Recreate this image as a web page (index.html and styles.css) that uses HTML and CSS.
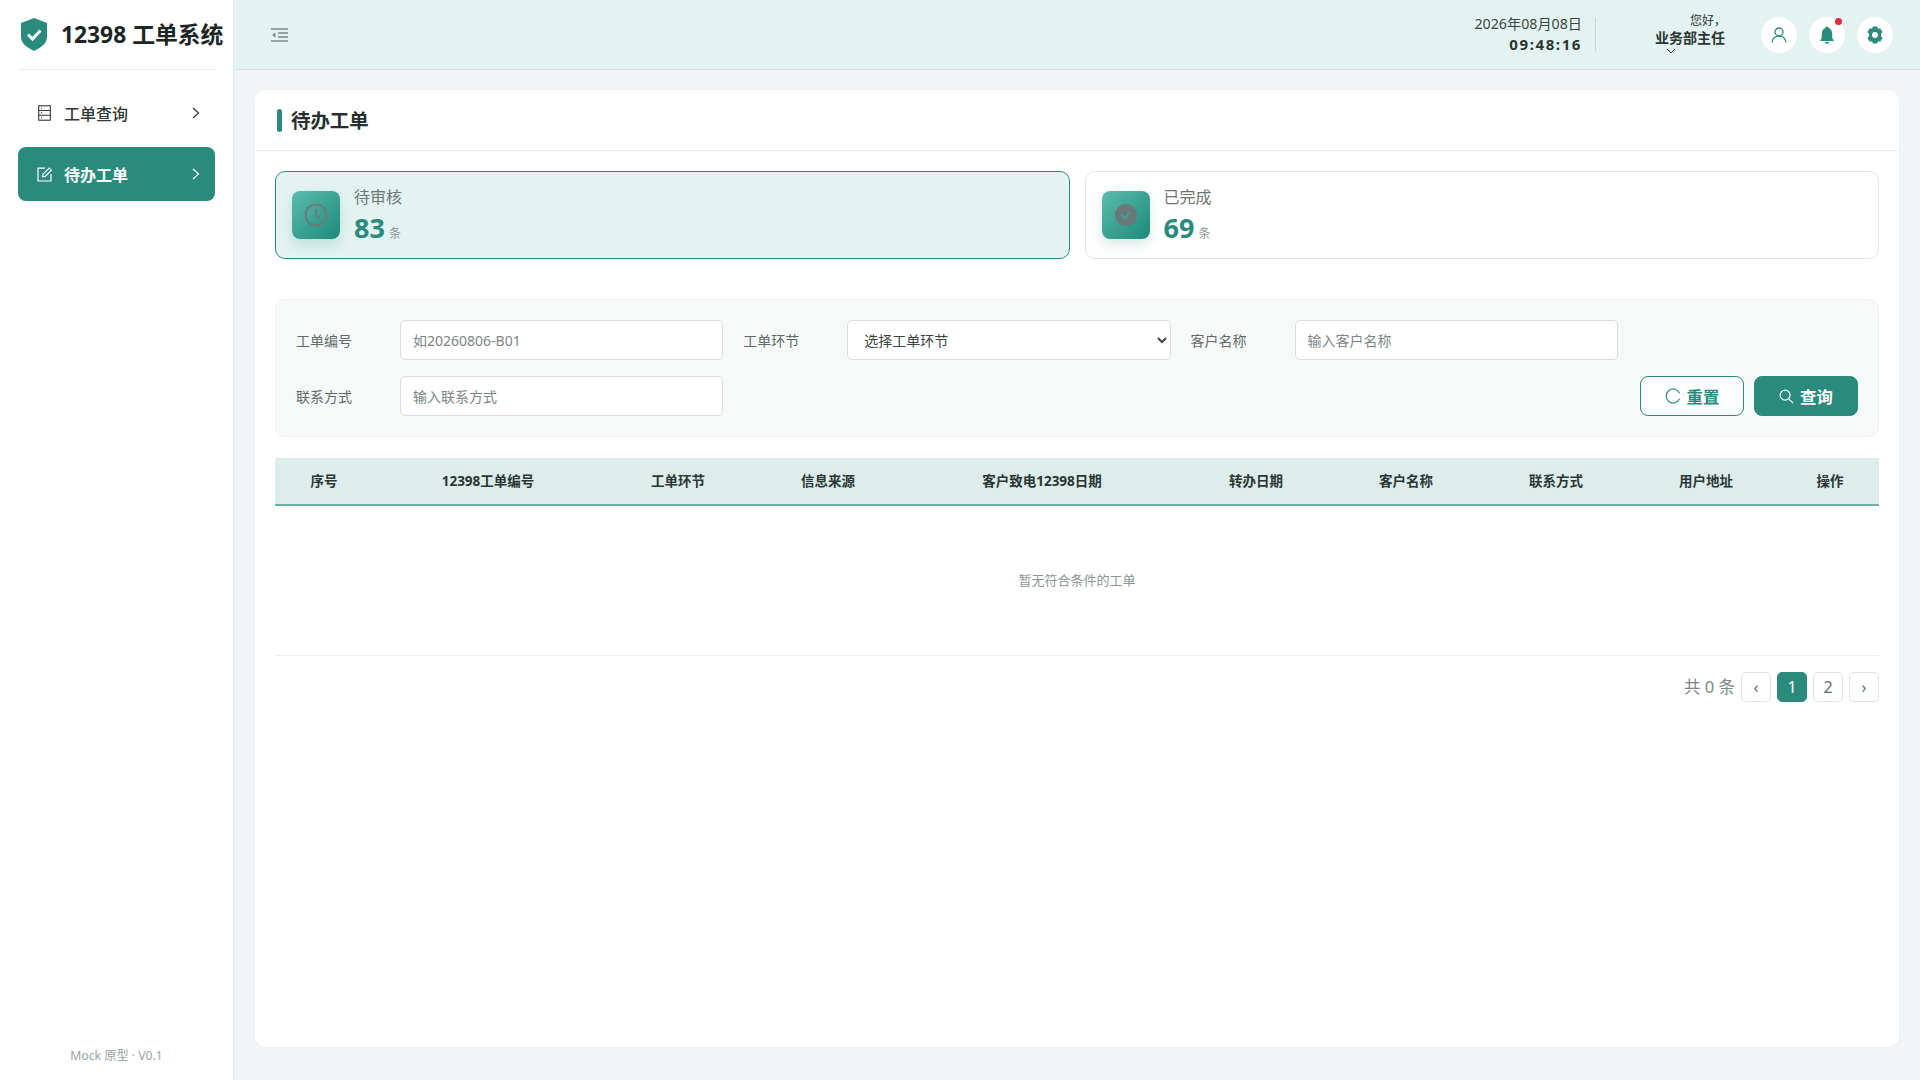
FILE: index.html
```html
<!DOCTYPE html>
<html lang="zh-CN">

<head>
    <meta charset="UTF-8">
    <title>12398 工单系统</title>
    <link rel="stylesheet" href="styles.css">
</head>

<body>
    <div class="app">
        <aside class="sidebar">
            <div class="brand">
                <svg class="brand-logo" viewBox="0 0 28 33" width="28" height="33">
                    <path d="M14 0 L27 5 V19 C27 26 20 30 14 33 C8 30 1 26 1 19 V5 Z" fill="#2a8a7c" />
                    <path d="M8 16.5 L12.5 21 L20.5 12.5" fill="none" stroke="#fff" stroke-width="3" />
                </svg>
                <span class="brand-name">12398 工单系统</span>
            </div>
            <nav class="menu">
                <a class="menu-item">
                    <svg class="menu-icon" viewBox="0 0 14 16" width="15" height="16" fill="none" stroke="currentColor" stroke-width="1.1">
                        <rect x="1.2" y="0.8" width="11.6" height="14.4" />
                        <path d="M1.2 5.5 H12.8 M1.2 10.3 H12.8 M3.4 3.2 H4.6 M3.4 7.9 H4.6 M3.4 12.7 H4.6" />
                    </svg>
                    <span class="menu-text">工单查询</span>
                    <svg class="menu-arrow" viewBox="0 0 8 12" width="8" height="12" fill="none" stroke="currentColor" stroke-width="1.2">
                        <path d="M1 1 L6.5 6 L1 11" />
                    </svg>
                </a>
                <a class="menu-item active">
                    <svg class="menu-icon" viewBox="0 0 15 15" width="15" height="15" fill="none" stroke="currentColor" stroke-width="1.2">
                        <path d="M8 1.2 H1 V14 H14 V7" />
                        <path d="M5.5 9.8 L6 7.2 L12.2 1 L14.4 3.2 L8.2 9.4 Z" />
                    </svg>
                    <span class="menu-text">待办工单</span>
                    <svg class="menu-arrow" viewBox="0 0 8 12" width="8" height="12" fill="none" stroke="currentColor" stroke-width="1.2">
                        <path d="M1 1 L6.5 6 L1 11" />
                    </svg>
                </a>
            </nav>
            <div class="version">Mock 原型 · V0.1</div>
        </aside>

        <div class="main">
            <header class="topbar">
                <svg class="fold" viewBox="0 0 17 14" width="17" height="14" fill="none" stroke="#7c8a88" stroke-width="1.3">
                    <path d="M0 1 H17 M7 5 H17 M7 9 H17 M0 13 H17" />
                    <path d="M4.5 4.5 L1 7 L4.5 9.5 Z" fill="#7c8a88" stroke="none" />
                </svg>
                <div class="top-right">
                    <div class="clock">
                        <div class="clock-date">2026年08月08日</div>
                        <div class="clock-time">09:48:16</div>
                    </div>
                    <div class="user">
                        <div class="user-hello">您好，</div>
                        <div class="user-name">业务部主任</div>
                        <svg class="user-arrow" viewBox="0 0 10 6" width="10" height="6" fill="none" stroke="#34413f" stroke-width="1">
                            <path d="M1 1 L5 5 L9 1" />
                        </svg>
                    </div>
                    <div class="round-btn">
                        <svg viewBox="0 0 16 16" width="16" height="16" fill="none" stroke="#2a8a7c" stroke-width="1.3">
                            <circle cx="8" cy="5" r="4" />
                            <path d="M1 15.5 C1.5 11.5 4 9.2 8 9.2 C12 9.2 14.5 11.5 15 15.5" />
                        </svg>
                    </div>
                    <div class="round-btn has-dot">
                        <svg viewBox="0 0 16 18" width="16" height="18" fill="#2a8a7c">
                            <path d="M8 0.5 C9 0.5 9.5 1.2 9.5 2 C12 2.8 13.2 5 13.2 8 V12 L15 15 H1 L2.8 12 V8 C2.8 5 4 2.8 6.5 2 C6.5 1.2 7 0.5 8 0.5 Z" />
                            <path d="M5.8 16 H10.2 C10 17.2 9 17.8 8 17.8 C7 17.8 6 17.2 5.8 16 Z" />
                        </svg>
                        <span class="dot"></span>
                    </div>
                    <div class="round-btn">
                        <svg viewBox="0 0 18 18" width="18" height="18">
                            <path fill="#2a8a7c" fill-rule="evenodd" d="M6.8 0.6 H11.2 L11.9 2.8 L14.2 2.2 L16.6 6.2 L15 7.6 V10.4 L16.6 11.8 L14.2 15.8 L11.9 15.2 L11.2 17.4 H6.8 L6.1 15.2 L3.8 15.8 L1.4 11.8 L3 10.4 V7.6 L1.4 6.2 L3.8 2.2 L6.1 2.8 Z M9 6 A3 3 0 1 0 9 12 A3 3 0 1 0 9 6 Z" />
                        </svg>
                    </div>
                </div>
            </header>

            <main class="content">
                <section class="card">
                    <div class="card-head">
                        <span class="card-bar"></span>
                        <h1 class="card-title">待办工单</h1>
                    </div>
                    <div class="card-body">
                        <div class="stats">
                            <div class="stat active">
                                <div class="stat-icon">
                                    <svg viewBox="0 0 24 24" width="24" height="24" fill="none" stroke="#6b7b7a" stroke-width="2">
                                        <circle cx="12" cy="12" r="10.5" />
                                        <path d="M12 6 V12 L16 15.5" />
                                    </svg>
                                </div>
                                <div class="stat-text">
                                    <div class="stat-label">待审核</div>
                                    <div class="stat-value">83<small>条</small></div>
                                </div>
                            </div>
                            <div class="stat">
                                <div class="stat-icon">
                                    <svg viewBox="0 0 24 24" width="24" height="24">
                                        <circle cx="12" cy="12" r="11" fill="#687978" />
                                        <path d="M7.5 12 L10.8 15.3 L16.5 9" fill="none" stroke="#3fa596" stroke-width="1.6" />
                                    </svg>
                                </div>
                                <div class="stat-text">
                                    <div class="stat-label">已完成</div>
                                    <div class="stat-value">69<small>条</small></div>
                                </div>
                            </div>
                        </div>

                        <form class="filter">
                            <label>工单编号</label>
                            <input type="text" placeholder="如20260806-B01">
                            <label>工单环节</label>
                            <select>
                                <option>选择工单环节</option>
                            </select>
                            <label>客户名称</label>
                            <input type="text" placeholder="输入客户名称">
                            <label class="row-start">联系方式</label>
                            <input type="text" placeholder="输入联系方式">
                            <div class="filter-btns">
                                <button type="button" class="btn btn-line">
                                    <svg viewBox="0 0 16 16" width="16" height="16" fill="none" stroke="currentColor" stroke-width="1.2">
                                        <path d="M14.6 5.2 A7 7 0 1 0 14.6 10.8" />
                                    </svg>
                                    重置
                                </button>
                                <button type="button" class="btn btn-fill">
                                    <svg viewBox="0 0 16 16" width="15" height="15" fill="none" stroke="currentColor" stroke-width="1.3">
                                        <circle cx="6.5" cy="6.5" r="5.3" />
                                        <path d="M10.5 10.5 L15 15" />
                                    </svg>
                                    查询
                                </button>
                            </div>
                        </form>

                        <table class="list">
                            <colgroup>
                                <col class="c-no">
                                <col class="c-code">
                                <col class="c-std">
                                <col class="c-std">
                                <col class="c-date">
                                <col class="c-std">
                                <col class="c-std">
                                <col class="c-std">
                                <col class="c-std">
                                <col class="c-op">
                            </colgroup>
                            <thead>
                                <tr>
                                    <th>序号</th>
                                    <th>12398工单编号</th>
                                    <th>工单环节</th>
                                    <th>信息来源</th>
                                    <th>客户致电12398日期</th>
                                    <th>转办日期</th>
                                    <th>客户名称</th>
                                    <th>联系方式</th>
                                    <th>用户地址</th>
                                    <th>操作</th>
                                </tr>
                            </thead>
                            <tbody>
                                <tr>
                                    <td colspan="10" class="empty">暂无符合条件的工单</td>
                                </tr>
                            </tbody>
                        </table>

                        <div class="pager">
                            <span class="pager-total">共 0 条</span>
                            <span class="page-btn arrow">‹</span>
                            <span class="page-btn current">1</span>
                            <span class="page-btn">2</span>
                            <span class="page-btn arrow">›</span>
                        </div>
                    </div>
                </section>
            </main>
        </div>
    </div>
</body>

</html>
```

FILE: styles.css
```css
* {
    box-sizing: border-box;
}

body {
    margin: 0;
    font-family: "Noto Sans", "Noto Sans CJK SC", sans-serif;
    color: #25302e;
    background: #f2f5f7;
}

.app {
    display: flex;
    height: 1080px;
    overflow: hidden;
}

/* 侧边栏 */
.sidebar {
    width: 234px;
    flex-shrink: 0;
    display: flex;
    flex-direction: column;
    background: #fff;
    border-right: 1px solid #e6eaec;
    padding: 0 18px;
}

.brand {
    height: 70px;
    display: flex;
    align-items: center;
    gap: 13px;
    margin-right: -2px;
    padding-left: 2px;
    border-bottom: 1px solid #e9edee;
    white-space: nowrap;
}

.brand-logo {
    flex-shrink: 0;
}

.brand-name {
    margin-bottom: 2px;
    font-size: 22.8px;
    font-weight: 700;
    color: #1b2523;
}

.menu {
    display: flex;
    flex-direction: column;
    gap: 7px;
    margin-top: 16px;
}

.menu-item {
    height: 54px;
    display: flex;
    align-items: center;
    border-radius: 8px;
    padding: 0 15px 0 19px;
    color: #2f3a38;
    font-size: 16px;
    font-weight: 500;
}

.menu-item.active {
    background: #2a8a7c;
    color: #fff;
    font-weight: 700;
}

.menu-icon {
    margin-right: 12px;
}

.menu-text {
    flex: 1;
}

.version {
    margin-top: auto;
    padding-bottom: 16px;
    text-align: center;
    font-size: 12.2px;
    color: #98a3a2;
}

/* 顶栏 */
.main {
    flex: 1;
    min-width: 0;
    display: flex;
    flex-direction: column;
}

.topbar {
    height: 70px;
    flex-shrink: 0;
    display: flex;
    align-items: center;
    justify-content: space-between;
    padding: 0 27px 0 37px;
    background: #e2f3f1;
    border-bottom: 1px solid #d9e4e4;
}

.top-right {
    display: flex;
    align-items: center;
}

.clock {
    text-align: right;
    padding-right: 13px;
    border-right: 1px solid #c9d6d5;
    height: 34px;
    margin-right: 58px;
}

.clock-date {
    margin-top: -3px;
    font-size: 14.2px;
    line-height: 18px;
    color: #3a4644;
}

.clock-time {
    font-size: 15px;
    line-height: 22px;
    font-weight: 700;
    letter-spacing: 1.6px;
    color: #2b3533;
}

.user {
    width: 72px;
    margin-right: 23px;
    display: flex;
    flex-direction: column;
    align-items: center;
    color: #2b3533;
    white-space: nowrap;
}

.user-hello {
    margin: -2px 0 0 36px;
    font-size: 12px;
    line-height: 16px;
}

.user-name {
    margin-top: -1px;
    font-size: 14px;
    line-height: 20px;
    font-weight: 700;
}

.user-arrow {
    margin-right: 38px;
}

.round-btn {
    position: relative;
    width: 36px;
    height: 36px;
    margin-left: 12px;
    border-radius: 50%;
    background: #fff;
    display: flex;
    align-items: center;
    justify-content: center;
}

.dot {
    position: absolute;
    top: 1px;
    right: 3px;
    width: 7px;
    height: 7px;
    border-radius: 50%;
    background: #e8293a;
}

/* 内容 */
.content {
    flex: 1;
    padding: 19px 20px 32px;
}

.card {
    height: 100%;
    background: #fff;
    border: 1px solid #edf0f1;
    border-radius: 12px;
}

.card-head {
    height: 61px;
    display: flex;
    align-items: center;
    gap: 8px;
    padding-left: 22px;
    border-bottom: 1px solid #e9ecec;
}

.card-bar {
    width: 5px;
    height: 23px;
    border-radius: 3px;
    background: #2a8a7c;
}

.card-title {
    margin: 0 0 2px 1px;
    font-size: 19.4px;
    font-weight: 700;
    color: #25302e;
}

.card-body {
    padding: 20px 20px 0;
}

.stats {
    display: grid;
    grid-template-columns: 1fr 1fr;
    gap: 15px;
}

.stat {
    height: 88px;
    display: flex;
    align-items: center;
    gap: 14px;
    padding-left: 16px;
    background: #fff;
    border: 1px solid #dfe3e4;
    border-radius: 10px;
}

.stat.active {
    background: #e2f3f1;
    border-color: #2a8a7c;
}

.stat-icon {
    width: 48px;
    height: 48px;
    border-radius: 8px;
    display: flex;
    align-items: center;
    justify-content: center;
    background: linear-gradient(135deg, #5bbcae, #1d8a7b);
    box-shadow: 0 6px 12px rgba(42, 138, 124, .18);
}

.stat-text {
    margin-top: 8px;
}

.stat-label {
    font-size: 16px;
    line-height: 22px;
    color: #6a7674;
}

.stat-value {
    font-size: 27px;
    line-height: 39px;
    font-weight: 700;
    color: #2a8a7c;
}

.stat-value small {
    margin-left: 4px;
    font-size: 12px;
    font-weight: 400;
    color: #8b9695;
}

/* 筛选 */
.filter {
    margin-top: 40px;
    height: 138px;
    padding: 20px;
    display: grid;
    grid-template-columns: 84px 323.25px 84px 323.25px 84px 323.25px 1fr;
    grid-auto-rows: 40px;
    gap: 16px 20px;
    align-items: center;
    background: #f7f9f9;
    border: 1px solid #edf0f1;
    border-radius: 10px;
}

.filter label {
    font-size: 14px;
    color: #5f6b69;
}

.filter .row-start {
    grid-column: 1;
}

.filter input,
.filter select {
    width: 100%;
    height: 40px;
    border: 1px solid #d9dddd;
    border-radius: 5px;
    background: #fff;
    padding: 0 12px;
    font-family: inherit;
    font-size: 14px;
    color: #3a4644;
}

.filter input::placeholder {
    color: #7b8583;
}

.filter-btns {
    grid-column: 3 / -1;
    display: flex;
    justify-content: flex-end;
    gap: 10px;
}

.btn {
    width: 104px;
    height: 40px;
    border-radius: 8px;
    display: flex;
    align-items: center;
    justify-content: center;
    gap: 6px;
    font-family: inherit;
    font-size: 16.4px;
    font-weight: 700;
    cursor: pointer;
}

.btn-line {
    background: #fff;
    border: 1px solid #2a8a7c;
    color: #2a8a7c;
}

.btn-fill {
    background: #2a8a7c;
    border: 1px solid #2a8a7c;
    color: #fff;
}

/* 列表 */
.list {
    width: 100%;
    margin-top: 21px;
    border-collapse: collapse;
    table-layout: fixed;
}

.c-no { width: 98px; }
.c-code { width: 230px; }
.c-std { width: 150px; }
.c-date { width: 278px; }
.c-op { width: 98px; }

.list th {
    height: 47px;
    padding: 0 0 2px;
    background: #dcedeb;
    border-bottom: 2px solid #6fb0a6;
    font-size: 13.5px;
    font-weight: 700;
    color: #2b3533;
}

.empty {
    height: 150px;
    padding: 0 0 2px;
    text-align: center;
    font-size: 13px;
    color: #8b9695;
    border-bottom: 1px solid #edf0f1;
}

.pager {
    margin-top: 16px;
    display: flex;
    align-items: center;
    justify-content: flex-end;
    gap: 6px;
}

.pager-total {
    margin-bottom: 1px;
    font-size: 16.5px;
    color: #7d8886;
}

.page-btn {
    width: 30px;
    height: 30px;
    display: flex;
    align-items: center;
    justify-content: center;
    border: 1px solid #dfe3e4;
    border-radius: 5px;
    font-size: 16px;
    color: #5f6b69;
}

.page-btn.current {
    background: #2a8a7c;
    border-color: #2a8a7c;
    color: #fff;
}
```
